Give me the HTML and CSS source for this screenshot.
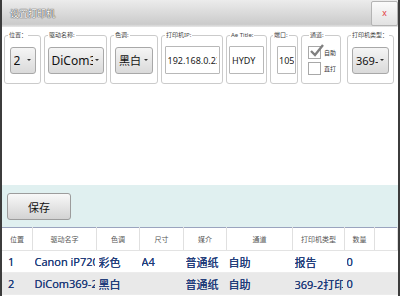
FILE: index.html
```
<!DOCTYPE html>
<html lang="zh">
<head>
  <meta charset="UTF-8">
  <title>设置打印机</title>
  <link rel="stylesheet" href="styles.css">
</head>
<body>
  <div class="window">
    <div class="titlebar">
      <span class="title">设置打印机</span>
      <button class="close-btn">x</button>
    </div>

    <div class="settings">
      <fieldset class="box w-pos">
        <legend>位置：</legend>
        <div class="combo c-pos"><span class="val">2</span><span class="arrow"></span></div>
      </fieldset>
      <fieldset class="box w-driver">
        <legend>驱动名称:</legend>
        <div class="combo c-driver"><span class="val">DiCom369-2</span><span class="arrow"></span></div>
      </fieldset>
      <fieldset class="box w-color">
        <legend>色调:</legend>
        <div class="combo c-color"><span class="val">黑白</span><span class="arrow"></span></div>
      </fieldset>
      <fieldset class="box w-ip">
        <legend>打印机IP:</legend>
        <input class="field f-ip" type="text" value="192.168.0.235">
      </fieldset>
      <fieldset class="box w-ae">
        <legend>Ae Title:</legend>
        <input class="field f-ae" type="text" value="HYDY">
      </fieldset>
      <fieldset class="box w-port">
        <legend>端口:</legend>
        <input class="field f-port" type="text" value="105">
      </fieldset>
      <fieldset class="box w-channel">
        <legend>通道:</legend>
        <div class="checks">
          <label class="check">
            <span class="tick checked">
              <svg width="16" height="14" viewBox="0 0 16 14"><path d="M2 7 L6 11 L14 1" fill="none" stroke="#808080" stroke-width="2.4"/></svg>
            </span>
            <span class="check-text">自助</span>
          </label>
          <label class="check">
            <span class="tick"></span>
            <span class="check-text">直打</span>
          </label>
        </div>
      </fieldset>
      <fieldset class="box w-type">
        <legend>打印机类型：</legend>
        <div class="combo c-type"><span class="val">369-2</span><span class="arrow"></span></div>
      </fieldset>
    </div>

    <div class="blank"></div>

    <div class="toolbar">
      <button class="save-btn">保存</button>
    </div>

    <table class="printers">
      <thead>
        <tr>
          <th class="col-pos">位置</th>
          <th class="col-driver">驱动名字</th>
          <th class="col-color">色调</th>
          <th class="col-size">尺寸</th>
          <th class="col-media">媒介</th>
          <th class="col-channel">通道</th>
          <th class="col-type">打印机类型</th>
          <th class="col-count">数量</th>
          <th class="col-rest"></th>
        </tr>
      </thead>
      <tbody>
        <tr>
          <td class="num">1</td>
          <td><div class="cell">Canon iP7200</div></td>
          <td><div class="cell">彩色</div></td>
          <td><div class="cell">A4</div></td>
          <td><div class="cell">普通纸</div></td>
          <td><div class="cell">自助</div></td>
          <td><div class="cell">报告</div></td>
          <td><div class="cell">0</div></td>
          <td></td>
        </tr>
        <tr class="alt">
          <td class="num">2</td>
          <td><div class="cell">DiCom369-2</div></td>
          <td><div class="cell">黑白</div></td>
          <td></td>
          <td><div class="cell">普通纸</div></td>
          <td><div class="cell">自助</div></td>
          <td><div class="cell">369-2打印</div></td>
          <td><div class="cell">0</div></td>
          <td></td>
        </tr>
      </tbody>
    </table>
  </div>
</body>
</html>
```

FILE: styles.css
```
body {
  margin: 0;
  padding: 0;
  font-family: "Noto Sans", "Noto Sans CJK SC", sans-serif;
  background: #fff;
  color: #222;
}

.window {
  width: 400px;
  height: 296px;
  box-sizing: border-box;
  border-left: 2px solid #3c3c3c;
  border-right: 2px solid #3c3c3c;
  background: #fff;
  overflow: hidden;
}

.titlebar {
  height: 27px;
  display: flex;
  align-items: center;
  justify-content: space-between;
  background: linear-gradient(#ececec, #cbcbcb 90%, #e8e8e8);
  padding-left: 8px;
}

.title {
  font-size: 9px;
  color: #fafafa;
  text-shadow: 0 0 1px #555, 0 0 1px #555, 0 0 1px #666;
}

.close-btn {
  width: 27px;
  height: 25px;
  margin-top: -1px;
  border: 1px solid #b4b4b4;
  border-radius: 2px;
  background: linear-gradient(#fbfbfb, #e2e2e2);
  color: #e23c3c;
  font-family: "Liberation Sans", sans-serif;
  font-size: 9px;
  padding: 0;
}

.settings {
  display: flex;
  gap: 3px;
  padding: 4px 0 0 2px;
}

.box {
  margin: 0;
  padding: 0 2px 2px;
  height: 53px;
  box-sizing: border-box;
  border: 1px solid #cbcbcb;
  border-radius: 3px;
  display: flex;
  align-items: center;
  justify-content: center;
  min-width: 0;
}

.box legend {
  font-size: 6px;
  line-height: 8px;
  padding: 0 1px;
  margin-left: 1px;
  color: #444;
}

.w-pos { width: 37px; }
.w-driver { width: 63px; }
.w-color { width: 48px; }
.w-ip { width: 62px; }
.w-ae { width: 41px; }
.w-port { width: 28px; padding: 0 1px 2px; justify-content: flex-end; }
.w-channel { width: 40px; justify-content: flex-start; padding-left: 6px; }
.w-type { width: 47px; margin-left: 3px; }

.combo {
  height: 27px;
  box-sizing: border-box;
  border: 1px solid #a8a8a8;
  border-radius: 3px;
  background: linear-gradient(#f5f5f5, #dadada);
  display: flex;
  align-items: center;
  padding-left: 3px;
  font-size: 12px;
  color: #111;
  overflow: hidden;
}

.combo .val {
  flex: 1;
  overflow: hidden;
  white-space: nowrap;
}

.combo .arrow {
  width: 0;
  height: 0;
  margin: 0 4px 0 2px;
  border-left: 2px solid transparent;
  border-right: 2px solid transparent;
  border-top: 2px solid #333;
}

.c-pos { width: 26px; }
.c-driver { width: 56px; }
.c-color { width: 38px; font-size: 11px; }
.c-type { width: 37px; font-size: 11px; }

.field {
  height: 28px;
  box-sizing: border-box;
  border: 1px solid #b8b8b8;
  border-radius: 1px;
  padding: 0 2px;
  font-family: "Noto Sans", sans-serif;
  font-size: 9px;
  color: #222;
  background: #fff;
}

.f-ip { width: 55px; }
.f-ae { width: 35px; }
.f-port { width: 19px; padding: 0 1px; }

.checks {
  display: flex;
  flex-direction: column;
  gap: 3px;
}

.check {
  display: flex;
  align-items: center;
  gap: 3px;
}

.tick {
  width: 13px;
  height: 13px;
  box-sizing: border-box;
  border: 1px solid #a8a8a8;
  background: #fff;
  position: relative;
}

.tick svg {
  position: absolute;
  left: 0;
  top: -3px;
}

.check-text {
  font-size: 6px;
  color: #333;
}

.blank {
  height: 101px;
}

.toolbar {
  height: 42px;
  background: #e0f0f0;
  padding: 8px 0 0 5px;
  box-sizing: border-box;
}

.save-btn {
  width: 64px;
  height: 27px;
  border: 1px solid #9c9c9c;
  border-radius: 3px;
  background: linear-gradient(#f8f8f8, #d3d3d3);
  font-family: "Noto Sans CJK SC", sans-serif;
  font-size: 11px;
  color: #111;
  padding: 0;
}

.printers {
  border-collapse: collapse;
  table-layout: fixed;
  width: 396px;
  border-top: 1px solid #9aa4be;
}

.printers th {
  height: 22px;
  font-size: 7px;
  font-weight: normal;
  color: #555;
  text-align: center;
  border-right: 1px solid #e0e0e0;
  border-bottom: 1px solid #e3e3e3;
  padding: 0;
}

.printers td {
  height: 21px;
  padding: 0 0 0 2px;
  font-family: "Open Sans", "Noto Sans CJK SC", sans-serif;
  font-size: 11px;
  color: #1d3a78;
  border-bottom: 1px solid #ececec;
}

.printers .cell {
  white-space: nowrap;
  overflow: hidden;
  margin-right: 2px;
  text-shadow: 0 0 0.4px #1d3a78;
}

.printers td.num {
  padding-left: 6px;
  text-shadow: 0 0 0.4px #1d3a78;
}

.printers tr.alt td {
  background: #e9e9e9;
}

.col-pos { width: 30px; }
.col-driver { width: 63px; }
.col-color { width: 42px; }
.col-size { width: 43px; }
.col-media { width: 42px; }
.col-channel { width: 65px; }
.col-type { width: 51px; }
.col-count { width: 29px; }
```
